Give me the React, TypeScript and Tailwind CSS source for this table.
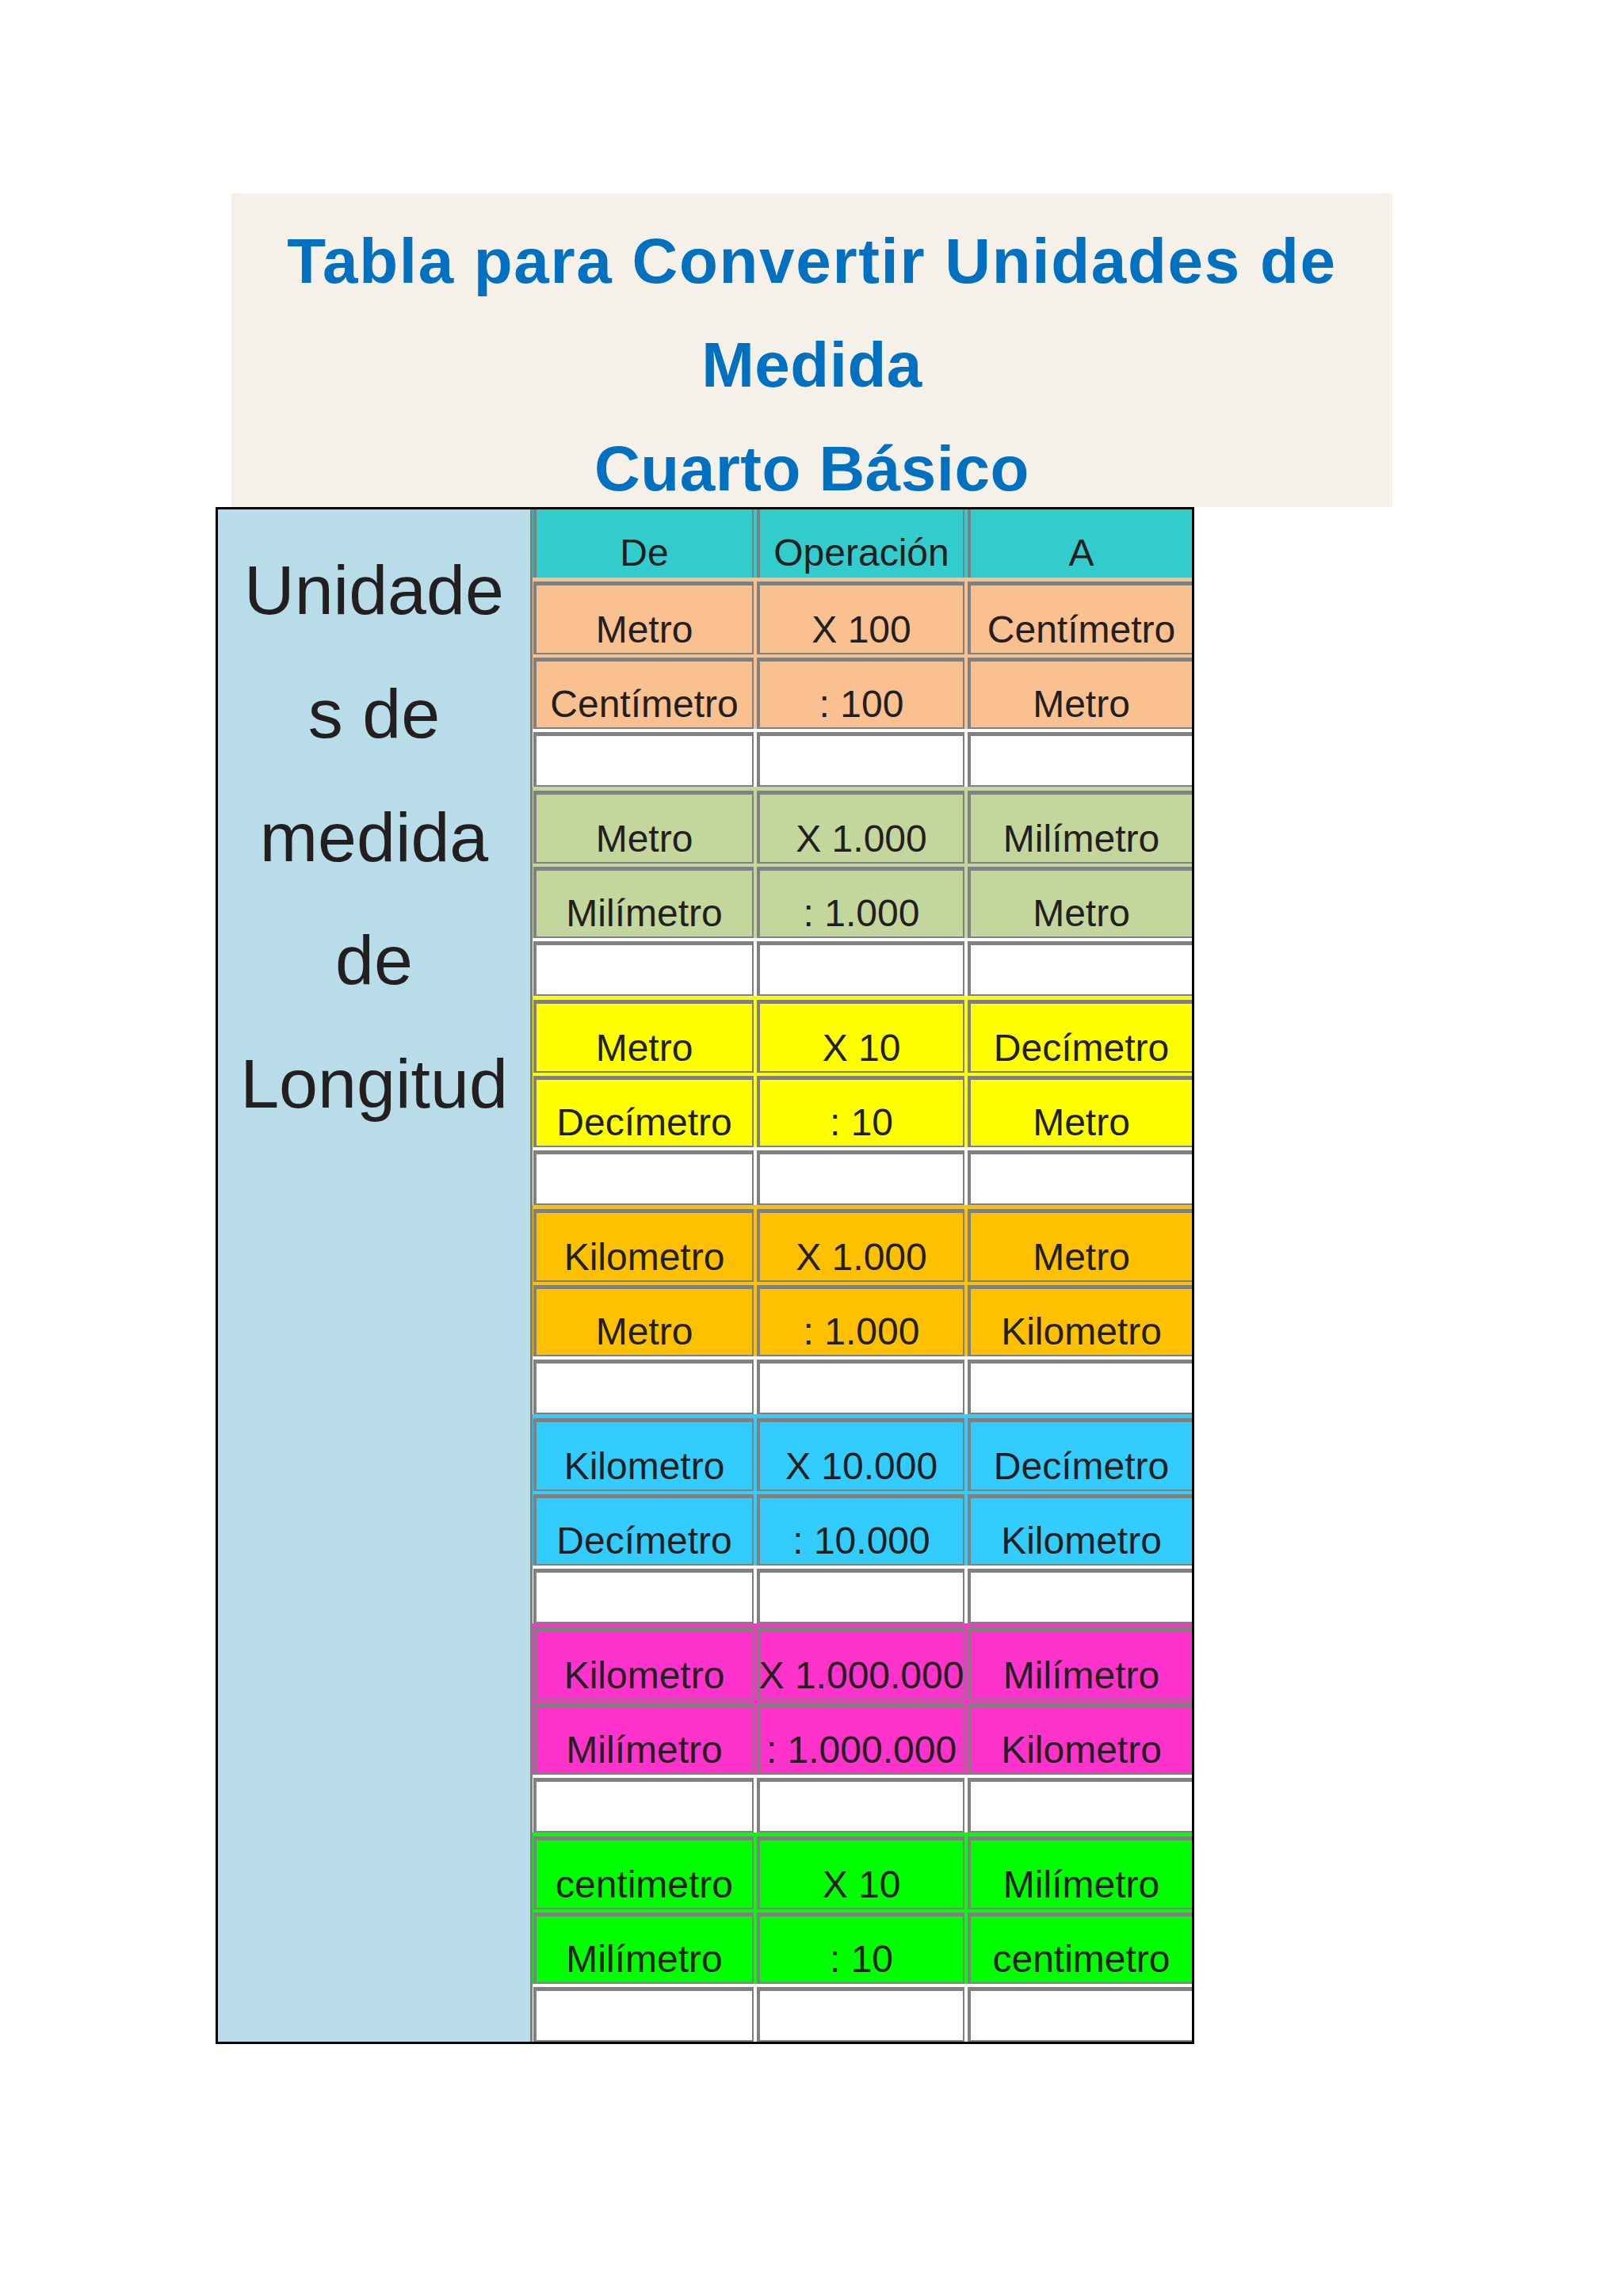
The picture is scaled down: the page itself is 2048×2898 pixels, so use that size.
import React from "react";

type Group = {
  rowBg: string;
  rows: [string, string, string][];
};

const groups: Group[] = [
  { rowBg: "bg-[#fac090]", rows: [["Metro", "X 100", "Centímetro"], ["Centímetro", ": 100", "Metro"]] },
  { rowBg: "bg-[#c3d69b]", rows: [["Metro", "X 1.000", "Milímetro"], ["Milímetro", ": 1.000", "Metro"]] },
  { rowBg: "bg-[#ffff00]", rows: [["Metro", "X 10", "Decímetro"], ["Decímetro", ": 10", "Metro"]] },
  { rowBg: "bg-[#ffc000]", rows: [["Kilometro", "X 1.000", "Metro"], ["Metro", ": 1.000", "Kilometro"]] },
  { rowBg: "bg-[#33ccff]", rows: [["Kilometro", "X 10.000", "Decímetro"], ["Decímetro", ": 10.000", "Kilometro"]] },
  { rowBg: "bg-[#ff33cc]", rows: [["Kilometro", "X 1.000.000", "Milímetro"], ["Milímetro", ": 1.000.000", "Kilometro"]] },
  { rowBg: "bg-[#00ff00]", rows: [["centimetro", "X 10", "Milímetro"], ["Milímetro", ": 10", "centimetro"]] },
];

function Cell({ text, last, height }: { text: string; last?: boolean; height: string }) {
  return (
    <div
      className={`flex items-end justify-center border-t-[5px] border-b-[2px] border-l-[4px] border-[#808080] pb-[2px] text-[48px] leading-[1.15] whitespace-nowrap text-[#231f20] ${height} ${
        last ? "border-r-0" : "border-r-[2px]"
      }`}
    >
      {text}
    </div>
  );
}

function DataRow({ bg, cells, first }: { bg: string; cells: [string, string, string]; first: boolean }) {
  const h = first ? "h-[92px]" : "h-[90px]";
  return (
    <div className={`grid grid-cols-[278px_262px_283px] gap-x-[4px] pl-[1px] ${first ? "pt-[5px]" : "pt-[4px]"} ${bg}`}>
      {cells.map((c, i) => (
        <div key={i} className={bg}>
          <Cell text={c} last={i === 2} height={h} />
        </div>
      ))}
    </div>
  );
}

function BlankRow() {
  return (
    <div className="grid grid-cols-[278px_262px_283px] gap-x-[4px] pl-[1px] pt-[4px] bg-white">
      {[0, 1, 2].map((i) => (
        <div
          key={i}
          className={`h-[69px] bg-white border-t-[5px] border-b-[2px] border-l-[4px] border-[#808080] ${
            i === 2 ? "border-r-0" : "border-r-[2px]"
          }`}
        />
      ))}
    </div>
  );
}

function HeaderRow() {
  const heads = ["De", "Operación", "A"];
  return (
    <div className="grid grid-cols-[278px_262px_283px] gap-x-[4px] pl-[1px] bg-[#33cccc]">
      {heads.map((h, i) => (
        <div
          key={i}
          className={`flex h-[86px] items-end justify-center border-l-[4px] border-[#808080] bg-[#33cccc] pb-[4px] text-[48px] leading-[1.15] text-[#231f20] ${
            i === 2 ? "border-r-0" : "border-r-[2px]"
          }`}
        >
          {h}
        </div>
      ))}
    </div>
  );
}

export default function App() {
  return (
    <div className="min-h-[2898px] w-[2048px] bg-white pt-[244px] font-['Liberation_Sans',Arial,sans-serif]">
      <div className="flex flex-col items-start">
        <div className="ml-[292px] h-[396px] w-[1465px] overflow-hidden bg-[#f5f0e8] pt-[20px] text-center text-[80px] font-bold leading-[131px] tracking-[0.5px] text-[#0070c0]">
          <div className="tracking-[1.7px]">Tabla para Convertir Unidades de</div>
          <div>Medida</div>
          <div>Cuarto Básico</div>
        </div>

        <div className="ml-[272px] flex w-[1235px] border-[3px] border-black">
          <div className="w-[397px] shrink-0 border-r-[3px] border-[#808080] bg-[#b8dde9] pt-[24px] text-center text-[88px] leading-[155.75px] text-[#231f20]">
            <div>Unidade</div>
            <div>s de</div>
            <div>medida</div>
            <div>de</div>
            <div>Longitud</div>
          </div>
          <div className="flex flex-1 flex-col">
            <HeaderRow />
            {groups.map((g, gi) => (
              <React.Fragment key={gi}>
                <DataRow bg={g.rowBg} cells={g.rows[0]} first={true} />
                <DataRow bg={g.rowBg} cells={g.rows[1]} first={false} />
                <BlankRow />
              </React.Fragment>
            ))}
          </div>
        </div>
      </div>
    </div>
  );
}
